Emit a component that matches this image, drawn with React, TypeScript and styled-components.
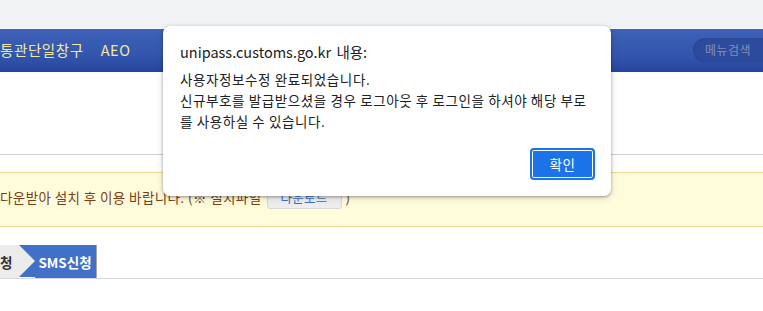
import styled, { createGlobalStyle } from 'styled-components';

const GlobalStyle = createGlobalStyle`
  html, body {
    margin: 0;
    padding: 0;
    background: #ffffff;
    overflow: hidden;
  }
  body {
    font-family: "Noto Sans CJK KR", "Noto Sans", sans-serif;
  }
`;

const Page = styled.div`
  position: relative;
  width: 763px;
  height: 311px;
  overflow: hidden;
  background: #fff;
`;

const TopStrip = styled.div`
  height: 28px;
  background: #f1f3f4;
  border-bottom: 1px solid #fafafa;
`;

const Header = styled.div`
  display: flex;
  align-items: center;
  justify-content: space-between;
  height: 43px;
  background: linear-gradient(to bottom, #3d62b8 0%, #3456ad 60%, #26449f 100%);
`;

const Nav = styled.div`
  display: flex;
  align-items: center;
  gap: 17px;
  margin-top: -2px;
`;

const NavItem = styled.span`
  font-size: 14.5px;
  color: #f3e8a6;
  letter-spacing: 0.6px;
`;

const MenuSearch = styled.div`
  width: 80px;
  height: 24px;
  margin-right: -10px;
  margin-top: -2px;
  border-radius: 12px;
  background: #2d4b9c;
  color: #8290b8;
  font-size: 12px;
  letter-spacing: 0.5px;
  display: flex;
  align-items: center;
  padding-left: 12px;
  box-sizing: border-box;
  box-shadow: inset 0 0 2px rgba(0, 0, 0, 0.2);
`;

const SubBar = styled.div`
  height: 82px;
  border-bottom: 1px solid #cfcfcf;
`;

const Notice = styled.div`
  margin-top: 17px;
  height: 55px;
  box-sizing: border-box;
  padding-bottom: 5px;
  background: #fffcdc;
  border-top: 1px solid #f0d890;
  border-bottom: 1px solid #f0d890;
  display: flex;
  align-items: center;
  font-size: 13.5px;
  letter-spacing: 0.4px;
  color: #7a3d14;
  white-space: nowrap;
`;

const DownloadButton = styled.span`
  display: inline-flex;
  align-items: center;
  justify-content: center;
  width: 73px;
  height: 21px;
  margin: 0 4px 0 5px;
  background: #eeeeee;
  border: 1px solid #d8d8d8;
  border-radius: 3px;
  color: #3a6ec8;
  font-size: 12.5px;
  letter-spacing: 0.3px;
`;

const Steps = styled.div`
  margin-top: 18px;
  display: flex;
  height: 33px;
  border-bottom: 1px solid #d8d8d8;
`;

const Step = styled.div<{ $active?: boolean }>`
  display: flex;
  align-items: center;
  height: 33px;
  box-sizing: border-box;
  padding: ${(p) => (p.$active ? '0 4px 0 3px' : '0 7px 0 0')};
  background: ${(p) => (p.$active ? '#4170c9' : '#ececec')};
  color: ${(p) => (p.$active ? '#ffffff' : '#333333')};
  font-size: 13.5px;
  font-weight: bold;
  border-right: ${(p) => (p.$active ? '1px solid #a8a8a8' : 'none')};
`;

const Arrow = styled.span`
  display: block;
  width: 0;
  height: 0;
  border-top: 16.5px solid #4170c9;
  border-bottom: 16.5px solid #4170c9;
  border-left: 16px solid #ececec;
`;

const Dialog = styled.div`
  position: absolute;
  left: 163px;
  top: 26px;
  width: 448px;
  height: 170px;
  box-sizing: border-box;
  background: #ffffff;
  border-radius: 7px;
  box-shadow: 0 1px 3px rgba(0, 0, 0, 0.35), 0 2px 8px rgba(0, 0, 0, 0.12);
  padding: 15px 16px 16px 17px;
  display: flex;
  flex-direction: column;
`;

const DialogTitle = styled.div`
  font-size: 14.5px;
  color: #202124;
  height: 22px;
  line-height: 22px;
  word-spacing: 2px;
`;

const DialogBody = styled.div`
  margin-top: 6px;
  font-size: 13.5px;
  letter-spacing: 0.6px;
  line-height: 21px;
  color: #202124;
`;

const DialogFooter = styled.div`
  margin-top: auto;
  display: flex;
  justify-content: flex-end;
`;

const OkButton = styled.button`
  width: 65px;
  height: 32px;
  border-radius: 4px;
  background: #1a73e8;
  border: 2px solid #1a73e8;
  box-shadow: inset 0 0 0 1px #ffffff;
  color: #ffffff;
  font-family: "Noto Sans CJK KR", sans-serif;
  font-size: 13.5px;
  letter-spacing: 0.5px;
  padding: 0;
`;

export default function App() {
  return (
    <Page>
      <GlobalStyle />
      <TopStrip />
      <Header>
        <Nav>
          <NavItem>통관단일창구</NavItem>
          <NavItem>AEO</NavItem>
        </Nav>
        <MenuSearch>메뉴검색</MenuSearch>
      </Header>
      <SubBar />
      <Notice>
        다운받아 설치 후 이용 바랍니다. (※ 설치파일
        <DownloadButton>다운로드</DownloadButton>)
      </Notice>
      <Steps>
        <Step>청</Step>
        <Arrow />
        <Step $active>SMS신청</Step>
      </Steps>
      <Dialog>
        <DialogTitle>unipass.customs.go.kr 내용:</DialogTitle>
        <DialogBody>
          사용자정보수정 완료되었습니다.
          <br />
          신규부호를 발급받으셨을 경우 로그아웃 후 로그인을 하셔야 해당 부로
          <br />를 사용하실 수 있습니다.
        </DialogBody>
        <DialogFooter>
          <OkButton>확인</OkButton>
        </DialogFooter>
      </Dialog>
    </Page>
  );
}
